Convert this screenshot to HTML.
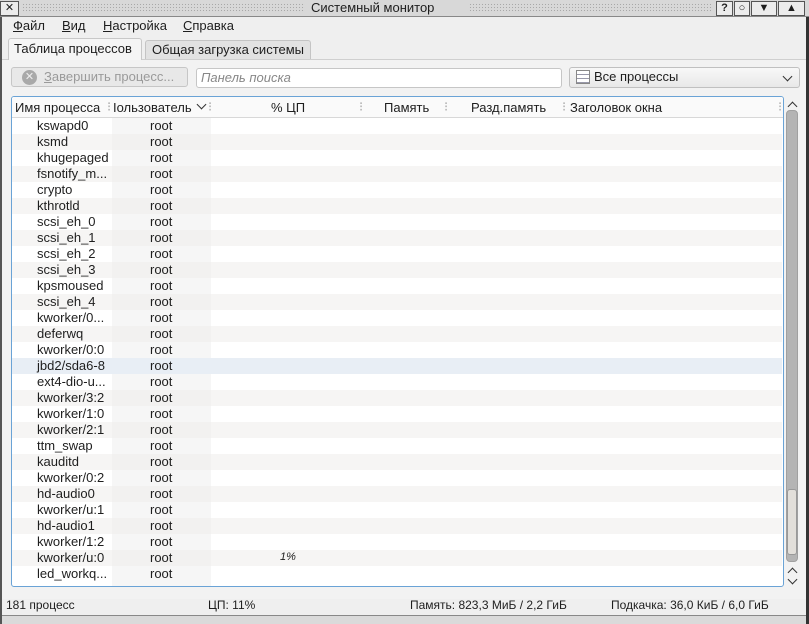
<!DOCTYPE html>
<html><head><meta charset="utf-8"><style>
*{margin:0;padding:0;box-sizing:border-box}
body{width:809px;height:624px;background:#d4d4d4;font-family:"Liberation Sans","DejaVu Sans",sans-serif;font-size:13px;color:#1e1e1e;position:relative;overflow:hidden}
.a{position:absolute;white-space:nowrap}
.win{position:absolute;left:2px;top:17px;width:804px;height:600px;background:#efefef}
.tb{position:absolute;left:0;top:0;width:809px;height:17px;background:#d8d8d8;border-bottom:1px solid #888}
.dots{position:absolute;top:3px;height:10px;background-image:radial-gradient(#a8a8a8 0.6px,transparent 0.8px);background-size:3px 3px}
.btn{position:absolute;top:1px;height:15px;border:1px solid #555;background:#ececec;font-size:11px;text-align:center;line-height:13px;font-weight:bold}
.row{position:absolute;left:12px;width:770px;height:16px;font-size:13px}
.row span{position:absolute;top:0px}
.ch{position:absolute;width:7px;height:7px;border-left:1.5px solid #333;border-top:1.5px solid #333}
</style></head><body>
<div class="tb">
 <div class="btn" style="left:0;width:19px">✕</div>
 <div class="dots" style="left:22px;width:283px"></div>
 <div class="a" style="left:311px;top:0;font-size:13px">Системный монитор</div>
 <div class="dots" style="left:469px;width:244px"></div>
 <div class="btn" style="left:716px;width:17px">?</div>
 <div class="btn" style="left:734px;width:16px;font-weight:normal">○</div>
 <div class="btn" style="left:751px;width:26px">▼</div>
 <div class="btn" style="left:778px;width:27px">▲</div>
</div>
<div style="position:absolute;left:806px;top:17px;width:3px;height:607px;background:#333"></div>
<div style="position:absolute;left:0;top:17px;width:2px;height:607px;background:#555"></div>
<div class="win"></div>
<div class="a" style="left:13px;top:18px"><u>Ф</u>айл</div>
<div class="a" style="left:62px;top:18px"><u>В</u>ид</div>
<div class="a" style="left:103px;top:18px"><u>Н</u>астройка</div>
<div class="a" style="left:183px;top:18px"><u>С</u>правка</div>
<div style="position:absolute;left:2px;top:59px;width:804px;height:540px;background:#f2f2f2;border-top:1px solid #cfcfcf"></div>
<div style="position:absolute;left:8px;top:38px;width:134px;height:22px;background:#f5f5f5;border:1px solid #c8c8c8;border-bottom:none;border-radius:3px 3px 0 0"></div>
<div class="a" style="left:14px;top:41px">Таблица процессов</div>
<div style="position:absolute;left:145px;top:40px;width:166px;height:19px;background:#e2e2e2;border:1px solid #c4c4c4;border-bottom:none;border-radius:3px 3px 0 0"></div>
<div class="a" style="left:152px;top:42px">Общая загрузка системы</div>
<div style="position:absolute;left:11px;top:67px;width:177px;height:20px;border:1px solid #c6c6c6;border-radius:3px;background:#e8e8e8"></div>
<div style="position:absolute;left:22px;top:70px;width:15px;height:15px;border-radius:50%;background:#a9a9a9;color:#eee;font-size:11px;line-height:15px;text-align:center;font-weight:bold">✕</div>
<div class="a" style="left:44px;top:69px;color:#9a9a9a"><u>З</u>авершить процесс...</div>
<div style="position:absolute;left:196px;top:68px;width:366px;height:20px;border:1px solid #c6c6c6;border-radius:3px;background:#fff"></div>
<div class="a" style="left:201px;top:70px;color:#888;font-style:italic">Панель поиска</div>
<div style="position:absolute;left:569px;top:67px;width:231px;height:21px;border:1px solid #c0c0c0;border-radius:3px;background:linear-gradient(#f8f8f8,#e8e8e8)"></div>
<div style="position:absolute;left:576px;top:70px;width:14px;height:14px;border:1px solid #888;background:repeating-linear-gradient(#fff 0 3px,#99a 3px 4px)"></div>
<div class="a" style="left:594px;top:69px">Все процессы</div>
<div class="ch" style="left:784px;top:73px;transform:rotate(225deg)"></div>
<div style="position:absolute;left:11px;top:96px;width:773px;height:491px;border:1px solid #6aa3d6;border-radius:3px;background:#fff;overflow:hidden">
 <div style="position:absolute;left:0;top:0;width:771px;height:21px;background:#fafafa;border-bottom:1px solid #d8d8d8"></div>
 <div style="position:absolute;left:100px;top:21px;width:99px;height:470px;background:#f6f6f6"></div>
</div>
<div class="a" style="left:15px;top:100px">Имя процесса</div>
<div class="a" style="left:107px;top:99px;color:#aaa">⁝</div>
<div class="a" style="left:113px;top:100px;width:82px;overflow:hidden">Іользователь</div>
<div class="ch" style="left:198px;top:101px;transform:rotate(225deg)"></div>
<div class="a" style="left:208px;top:99px;color:#aaa">⁝</div>
<div class="a" style="left:271px;top:100px">% ЦП</div>
<div class="a" style="left:359px;top:99px;color:#aaa">⁝</div>
<div class="a" style="left:384px;top:100px">Память</div>
<div class="a" style="left:444px;top:99px;color:#aaa">⁝</div>
<div class="a" style="left:471px;top:100px">Разд.память</div>
<div class="a" style="left:562px;top:99px;color:#aaa">⁝</div>
<div class="a" style="left:570px;top:100px">Заголовок окна</div>
<div class="a" style="left:778px;top:99px;color:#aaa">⁝</div>
<div id="rows"></div>
<div class="ch" style="left:789px;top:103px;transform:rotate(45deg)"></div>
<div style="position:absolute;left:786px;top:110px;width:12px;height:452px;background:#b4b4b4;border:1px solid #a0a0a0;border-radius:4px"></div>
<div style="position:absolute;left:787px;top:489px;width:10px;height:66px;background:#e2dfda;border:1px solid #999;border-radius:3px"></div>
<div class="ch" style="left:789px;top:569px;transform:rotate(45deg)"></div>
<div class="ch" style="left:789px;top:576px;transform:rotate(225deg)"></div>
<div style="position:absolute;left:2px;top:615px;width:804px;height:9px;background:#dadada;border-top:1px solid #888"></div>
<div class="a" style="left:6px;top:598px;font-size:12px">181 процесс</div>
<div class="a" style="left:208px;top:598px;font-size:12px">ЦП: 11%</div>
<div class="a" style="left:410px;top:598px;font-size:12px">Память: 823,3 МиБ / 2,2 ГиБ</div>
<div class="a" style="left:611px;top:598px;font-size:12px">Подкачка: 36,0 КиБ / 6,0 ГиБ</div>
<script>
var n=["kswapd0","ksmd","khugepaged","fsnotify_m...","crypto","kthrotld","scsi_eh_0","scsi_eh_1","scsi_eh_2","scsi_eh_3","kpsmoused","scsi_eh_4","kworker/0...","deferwq","kworker/0:0","jbd2/sda6-8","ext4-dio-u...","kworker/3:2","kworker/1:0","kworker/2:1","ttm_swap","kauditd","kworker/0:2","hd-audio0","kworker/u:1","hd-audio1","kworker/1:2","kworker/u:0","led_workq..."];
var h="";
for(var i=0;i<n.length;i++){var y=118+i*16;var bg=i==15?"#e8eef5":(i%2?"rgba(240,238,236,0.6)":"transparent");
h+='<div class="row" style="top:'+y+'px;background:'+bg+'"><span style="left:25px">'+n[i]+'</span><span style="left:138px">root</span>'+(i==27?'<span style="left:268px;font-style:italic;font-size:11px;top:1px">1%</span>':'')+'</div>';}
document.getElementById("rows").innerHTML=h;
</script>
</body></html>
